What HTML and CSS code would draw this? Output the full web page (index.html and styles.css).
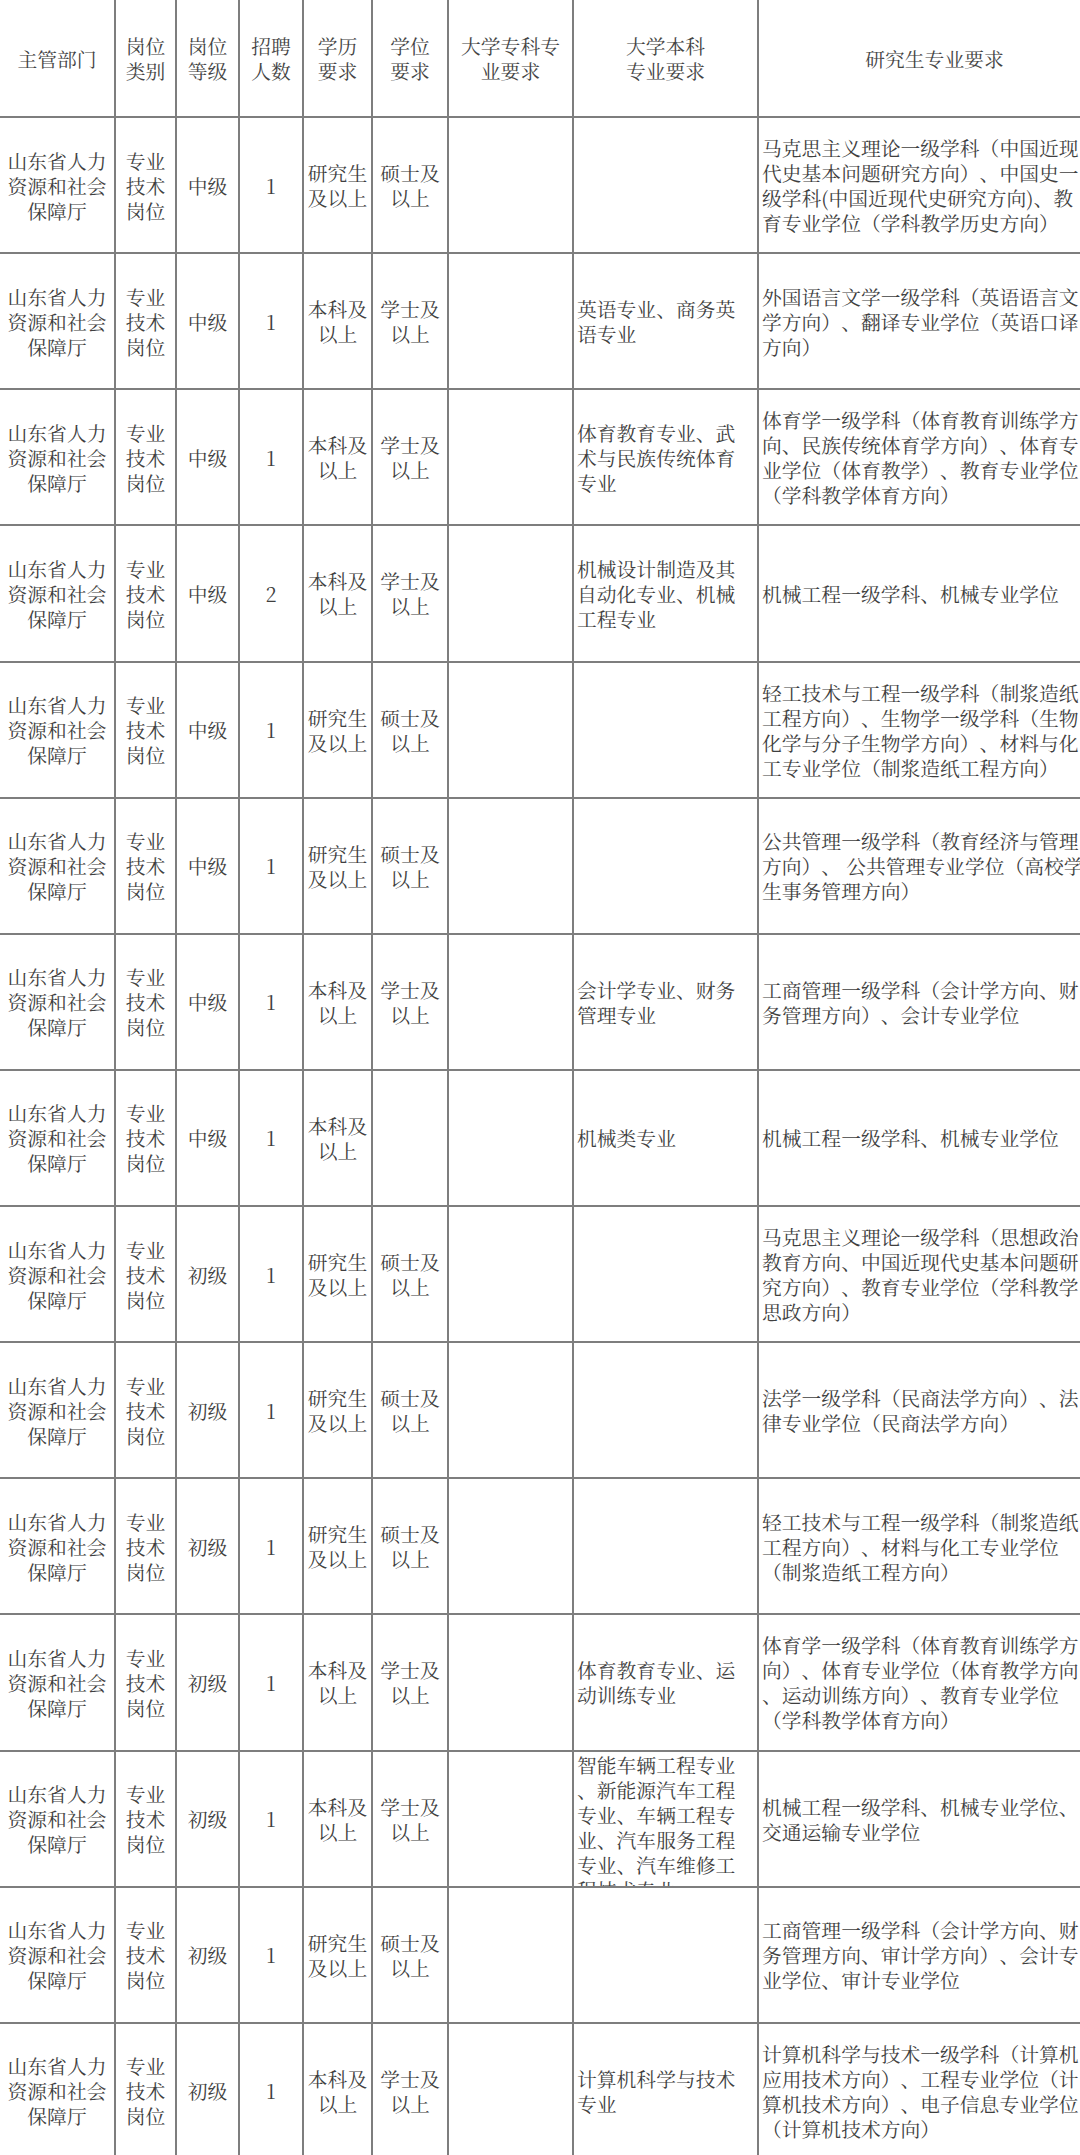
FILE: index.html
```html
<!DOCTYPE html>
<html lang="zh-CN">
<head>
<meta charset="utf-8">
<title>岗位表</title>
<link rel="stylesheet" href="styles.css">
</head>
<body>
<div class="sheet">
  <div class="row">
    <div class="c hd">主管部门</div>
    <div class="c hd">岗位<br>类别</div>
    <div class="c hd">岗位<br>等级</div>
    <div class="c hd">招聘<br>人数</div>
    <div class="c hd">学历<br>要求</div>
    <div class="c hd">学位<br>要求</div>
    <div class="c hd">大学专科专<br>业要求</div>
    <div class="c hd">大学本科<br>专业要求</div>
    <div class="c hd">研究生专业要求</div>
  </div>

  <div class="row">
    <div class="c">山东省人力<br>资源和社会<br>保障厅</div>
    <div class="c">专业<br>技术<br>岗位</div>
    <div class="c">中级</div>
    <div class="c">1</div>
    <div class="c">研究生<br>及以上</div>
    <div class="c">硕士及<br>以上</div>
    <div class="c"></div>
    <div class="c l"></div>
    <div class="c l">马克思主义理论一级学科（中国近现<br>代史基本问题研究方向）、中国史一<br>级学科(中国近现代史研究方向)、教<br>育专业学位（学科教学历史方向）</div>
  </div>

  <div class="row">
    <div class="c">山东省人力<br>资源和社会<br>保障厅</div>
    <div class="c">专业<br>技术<br>岗位</div>
    <div class="c">中级</div>
    <div class="c">1</div>
    <div class="c">本科及<br>以上</div>
    <div class="c">学士及<br>以上</div>
    <div class="c"></div>
    <div class="c l">英语专业、商务英<br>语专业</div>
    <div class="c l">外国语言文学一级学科（英语语言文<br>学方向）、翻译专业学位（英语口译<br>方向）</div>
  </div>

  <div class="row">
    <div class="c">山东省人力<br>资源和社会<br>保障厅</div>
    <div class="c">专业<br>技术<br>岗位</div>
    <div class="c">中级</div>
    <div class="c">1</div>
    <div class="c">本科及<br>以上</div>
    <div class="c">学士及<br>以上</div>
    <div class="c"></div>
    <div class="c l">体育教育专业、武<br>术与民族传统体育<br>专业</div>
    <div class="c l">体育学一级学科（体育教育训练学方<br>向、民族传统体育学方向）、体育专<br>业学位（体育教学）、教育专业学位<br>（学科教学体育方向）</div>
  </div>

  <div class="row">
    <div class="c">山东省人力<br>资源和社会<br>保障厅</div>
    <div class="c">专业<br>技术<br>岗位</div>
    <div class="c">中级</div>
    <div class="c">2</div>
    <div class="c">本科及<br>以上</div>
    <div class="c">学士及<br>以上</div>
    <div class="c"></div>
    <div class="c l">机械设计制造及其<br>自动化专业、机械<br>工程专业</div>
    <div class="c l">机械工程一级学科、机械专业学位</div>
  </div>

  <div class="row">
    <div class="c">山东省人力<br>资源和社会<br>保障厅</div>
    <div class="c">专业<br>技术<br>岗位</div>
    <div class="c">中级</div>
    <div class="c">1</div>
    <div class="c">研究生<br>及以上</div>
    <div class="c">硕士及<br>以上</div>
    <div class="c"></div>
    <div class="c l"></div>
    <div class="c l">轻工技术与工程一级学科（制浆造纸<br>工程方向）、生物学一级学科（生物<br>化学与分子生物学方向）、材料与化<br>工专业学位（制浆造纸工程方向）</div>
  </div>

  <div class="row">
    <div class="c">山东省人力<br>资源和社会<br>保障厅</div>
    <div class="c">专业<br>技术<br>岗位</div>
    <div class="c">中级</div>
    <div class="c">1</div>
    <div class="c">研究生<br>及以上</div>
    <div class="c">硕士及<br>以上</div>
    <div class="c"></div>
    <div class="c l"></div>
    <div class="c l">公共管理一级学科（教育经济与管理<br>方向）、 公共管理专业学位（高校学<br>生事务管理方向）</div>
  </div>

  <div class="row">
    <div class="c">山东省人力<br>资源和社会<br>保障厅</div>
    <div class="c">专业<br>技术<br>岗位</div>
    <div class="c">中级</div>
    <div class="c">1</div>
    <div class="c">本科及<br>以上</div>
    <div class="c">学士及<br>以上</div>
    <div class="c"></div>
    <div class="c l">会计学专业、财务<br>管理专业</div>
    <div class="c l">工商管理一级学科（会计学方向、财<br>务管理方向）、会计专业学位</div>
  </div>

  <div class="row">
    <div class="c">山东省人力<br>资源和社会<br>保障厅</div>
    <div class="c">专业<br>技术<br>岗位</div>
    <div class="c">中级</div>
    <div class="c">1</div>
    <div class="c">本科及<br>以上</div>
    <div class="c"></div>
    <div class="c"></div>
    <div class="c l">机械类专业</div>
    <div class="c l">机械工程一级学科、机械专业学位</div>
  </div>

  <div class="row">
    <div class="c">山东省人力<br>资源和社会<br>保障厅</div>
    <div class="c">专业<br>技术<br>岗位</div>
    <div class="c">初级</div>
    <div class="c">1</div>
    <div class="c">研究生<br>及以上</div>
    <div class="c">硕士及<br>以上</div>
    <div class="c"></div>
    <div class="c l"></div>
    <div class="c l">马克思主义理论一级学科（思想政治<br>教育方向、中国近现代史基本问题研<br>究方向）、教育专业学位（学科教学<br>思政方向）</div>
  </div>

  <div class="row">
    <div class="c">山东省人力<br>资源和社会<br>保障厅</div>
    <div class="c">专业<br>技术<br>岗位</div>
    <div class="c">初级</div>
    <div class="c">1</div>
    <div class="c">研究生<br>及以上</div>
    <div class="c">硕士及<br>以上</div>
    <div class="c"></div>
    <div class="c l"></div>
    <div class="c l">法学一级学科（民商法学方向）、法<br>律专业学位（民商法学方向）</div>
  </div>

  <div class="row">
    <div class="c">山东省人力<br>资源和社会<br>保障厅</div>
    <div class="c">专业<br>技术<br>岗位</div>
    <div class="c">初级</div>
    <div class="c">1</div>
    <div class="c">研究生<br>及以上</div>
    <div class="c">硕士及<br>以上</div>
    <div class="c"></div>
    <div class="c l"></div>
    <div class="c l">轻工技术与工程一级学科（制浆造纸<br>工程方向）、材料与化工专业学位<br>（制浆造纸工程方向）</div>
  </div>

  <div class="row">
    <div class="c">山东省人力<br>资源和社会<br>保障厅</div>
    <div class="c">专业<br>技术<br>岗位</div>
    <div class="c">初级</div>
    <div class="c">1</div>
    <div class="c">本科及<br>以上</div>
    <div class="c">学士及<br>以上</div>
    <div class="c"></div>
    <div class="c l">体育教育专业、运<br>动训练专业</div>
    <div class="c l">体育学一级学科（体育教育训练学方<br>向）、体育专业学位（体育教学方向<br>、运动训练方向）、教育专业学位<br>（学科教学体育方向）</div>
  </div>

  <div class="row">
    <div class="c">山东省人力<br>资源和社会<br>保障厅</div>
    <div class="c">专业<br>技术<br>岗位</div>
    <div class="c">初级</div>
    <div class="c">1</div>
    <div class="c">本科及<br>以上</div>
    <div class="c">学士及<br>以上</div>
    <div class="c"></div>
    <div class="c l top">智能车辆工程专业<br>、新能源汽车工程<br>专业、车辆工程专<br>业、汽车服务工程<br>专业、汽车维修工<br>程技术专业</div>
    <div class="c l">机械工程一级学科、机械专业学位、<br>交通运输专业学位</div>
  </div>

  <div class="row">
    <div class="c">山东省人力<br>资源和社会<br>保障厅</div>
    <div class="c">专业<br>技术<br>岗位</div>
    <div class="c">初级</div>
    <div class="c">1</div>
    <div class="c">研究生<br>及以上</div>
    <div class="c">硕士及<br>以上</div>
    <div class="c"></div>
    <div class="c l"></div>
    <div class="c l">工商管理一级学科（会计学方向、财<br>务管理方向、审计学方向）、会计专<br>业学位、审计专业学位</div>
  </div>

  <div class="row">
    <div class="c">山东省人力<br>资源和社会<br>保障厅</div>
    <div class="c">专业<br>技术<br>岗位</div>
    <div class="c">初级</div>
    <div class="c">1</div>
    <div class="c">本科及<br>以上</div>
    <div class="c">学士及<br>以上</div>
    <div class="c"></div>
    <div class="c l">计算机科学与技术<br>专业</div>
    <div class="c l">计算机科学与技术一级学科（计算机<br>应用技术方向）、工程专业学位（计<br>算机技术方向）、电子信息专业学位<br>（计算机技术方向）</div>
  </div>
</div>
</body>
</html>
```

FILE: styles.css
```css
html, body {
  margin: 0;
  padding: 0;
  background: #ffffff;
}

body {
  width: 1080px;
  height: 2155px;
  overflow: hidden;
}

.sheet {
  display: grid;
  grid-template-columns: 114px 59px 61px 62px 67px 74px 123px 183px 351px;
  grid-template-rows: 116px repeat(15, 134.14px);
  gap: 2px;
  width: max-content;
  background: #7e7e7e;
  font-family: "Noto Serif CJK SC", "Source Han Serif SC", "Noto Sans CJK SC", sans-serif;
  font-weight: 400;
  font-size: 19.8px;
  line-height: 25px;
  color: #3f3f3f;
  text-spacing-trim: space-all;
}

.row {
  display: contents;
}

.c {
  background: #ffffff;
  display: flex;
  align-items: center;
  justify-content: center;
  text-align: center;
  white-space: nowrap;
  overflow: hidden;
}

.hd {
  color: #444444;
}

.l {
  justify-content: flex-start;
  text-align: left;
  padding-left: 3px;
}

.top {
  align-items: flex-start;
}
```
